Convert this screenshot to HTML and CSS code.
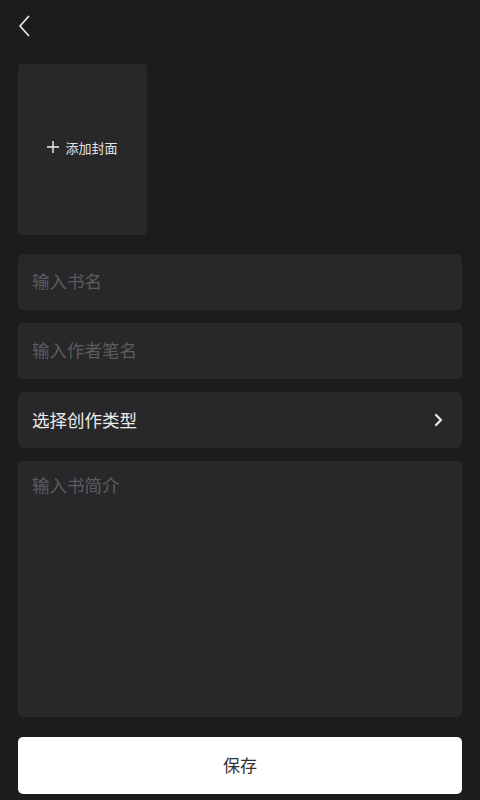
FILE: index.html
```html
<!DOCTYPE html>
<html lang="zh">
<head>
<meta charset="utf-8">
<link rel="stylesheet" href="styles.css">
</head>
<body>
<div class="page">
  <header class="header">
    <svg class="back" width="14" height="22" viewBox="0 0 14 22"><path d="M10.5 1.5 L2 11 L10.5 20.5" fill="none" stroke="#e6e6e6" stroke-width="1.8" stroke-linecap="round" stroke-linejoin="round"/></svg>
  </header>
  <div class="cover">
    <svg class="plus" width="12" height="12" viewBox="0 0 12 12"><path d="M6 0 V12 M0 6 H12" stroke="#f0f0f0" stroke-width="1.4"/></svg><span class="cover-text">添加封面</span>
  </div>
  <div class="form">
    <div class="field"><span class="ph">输入书名</span></div>
    <div class="field"><span class="ph">输入作者笔名</span></div>
    <div class="field select"><span class="label">选择创作类型</span>
      <svg width="10" height="14" viewBox="0 0 10 14"><path d="M2 2 L7 7 L2 12" fill="none" stroke="#ededed" stroke-width="2.2" stroke-linecap="round" stroke-linejoin="round"/></svg>
    </div>
    <div class="field area"><span class="ph">输入书简介</span></div>
  </div>
  <button class="save">保存</button>
</div>
</body>
</html>
```
FILE: styles.css
```css
html, body {
  margin: 0;
  padding: 0;
  background: #1c1c1c;
  font-family: "Noto Sans CJK SC", "Noto Sans", sans-serif;
}
.page {
  padding: 0 18px;
  display: flex;
  flex-direction: column;
}
.header {
  height: 52px;
  display: flex;
  align-items: center;
}
.cover {
  margin-top: 12px;
  width: 129px;
  height: 171px;
  background: #28282a;
  border-radius: 4px;
  display: flex;
  align-items: center;
  justify-content: center;
  color: #e4e4e4;
  font-size: 13px;
  padding-bottom: 5px;
  box-sizing: border-box;
}
.plus {
  margin-right: 6px;
}
.form {
  margin-top: 19px;
  display: flex;
  flex-direction: column;
  gap: 13px;
}
.field {
  height: 56px;
  background: #28282a;
  border-radius: 5px;
  padding: 0 14px 3px;
  display: flex;
  align-items: center;
  font-size: 17.5px;
  box-sizing: border-box;
}
.ph {
  color: #5c5c5f;
}
.select {
  justify-content: space-between;
  padding-right: 18px;
  padding-bottom: 0;
}
.label {
  color: #ebebeb;
  margin-top: -2px;
}
.area {
  height: 256px;
  align-items: flex-start;
  padding-top: 11px;
}
.save {
  margin-top: 20px;
  height: 57px;
  background: #ffffff;
  border: none;
  border-radius: 5px;
  font-family: "Noto Sans CJK SC", "Noto Sans", sans-serif;
  font-size: 17px;
  color: #333333;
  padding: 0 0 2px;
}
```
